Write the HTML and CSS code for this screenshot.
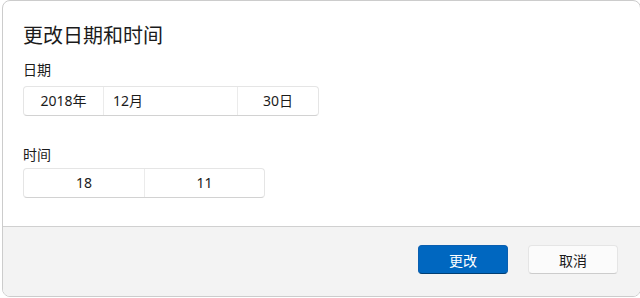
FILE: index.html
```html
<!DOCTYPE html>
<html lang="zh-CN">
<head>
<meta charset="utf-8">
<link rel="stylesheet" href="styles.css">
</head>
<body>
<div class="dialog">
  <div class="content">
    <h1 class="title">更改日期和时间</h1>
    <div class="label">日期</div>
    <div class="picker date-picker">
      <div class="cell year">2018年</div>
      <div class="cell month">12月</div>
      <div class="cell day">30日</div>
    </div>
    <div class="label time-label">时间</div>
    <div class="picker time-picker">
      <div class="cell hour">18</div>
      <div class="cell minute">11</div>
    </div>
  </div>
  <div class="footer">
    <button class="btn primary">更改</button>
    <button class="btn secondary">取消</button>
  </div>
</div>
</body>
</html>
```
FILE: styles.css
```css
html, body {
  margin: 0;
  padding: 0;
  background: #ffffff;
}
body {
  font-family: "Noto Sans", "Noto Sans CJK SC", sans-serif;
  color: #1b1b1b;
  width: 640px;
  height: 298px;
  overflow: hidden;
}
.dialog {
  box-sizing: border-box;
  margin-left: 2px;
  width: 639px;
  height: 297px;
  border: 1px solid #cccccc;
  border-radius: 8px;
  overflow: hidden;
  display: flex;
  flex-direction: column;
  background: #ffffff;
}
.content {
  flex: 1;
  padding: 20px 20px 0 20px;
}
.title {
  margin: 0;
  font-family: "Noto Sans CJK SC", sans-serif;
  font-size: 20px;
  font-weight: 400;
  line-height: 28px;
  height: 28px;
}
.label {
  margin-top: 10px;
  font-family: "Noto Sans CJK SC", sans-serif;
  font-size: 14px;
  line-height: 20px;
  height: 20px;
}
.time-label {
  margin-top: 28px;
}
.picker {
  box-sizing: border-box;
  margin-top: 7px;
  height: 30px;
  display: flex;
  border: 1px solid #e5e5e5;
  border-bottom-color: #d2d2d2;
  border-radius: 4px;
  background: #ffffff;
}
.date-picker { width: 296px; }
.time-picker { width: 242px; margin-top: 4px; }
.cell {
  font-family: "Noto Sans", "Noto Sans CJK SC", sans-serif;
  font-size: 14px;
  line-height: 28px;
  text-align: center;
}
.cell + .cell {
  border-left: 1px solid #ebebeb;
}
.year { width: 79px; }
.month { width: 134px; text-align: left; padding-left: 9px; box-sizing: border-box; }
.day { flex: 1; }
.hour { width: 120px; }
.minute { flex: 1; }
.footer {
  height: 70px;
  box-sizing: border-box;
  border-top: 1px solid #d0d0d0;
  background: #f3f3f3;
  display: flex;
  justify-content: flex-end;
  align-items: flex-start;
  gap: 20px;
  padding: 18px 22px 0 0;
}
.btn {
  box-sizing: border-box;
  width: 90px;
  height: 29px;
  border-radius: 4px;
  font-family: "Noto Sans CJK SC", sans-serif;
  font-size: 14px;
  line-height: 20px;
  padding: 0;
  cursor: pointer;
}
.primary {
  background: #0067c0;
  color: #ffffff;
  border: 1px solid #0a5fb0;
  border-bottom-color: #003e73;
}
.secondary {
  background: #fbfbfb;
  color: #1b1b1b;
  border: 1px solid #e5e5e5;
  border-bottom-color: #cccccc;
}
```
